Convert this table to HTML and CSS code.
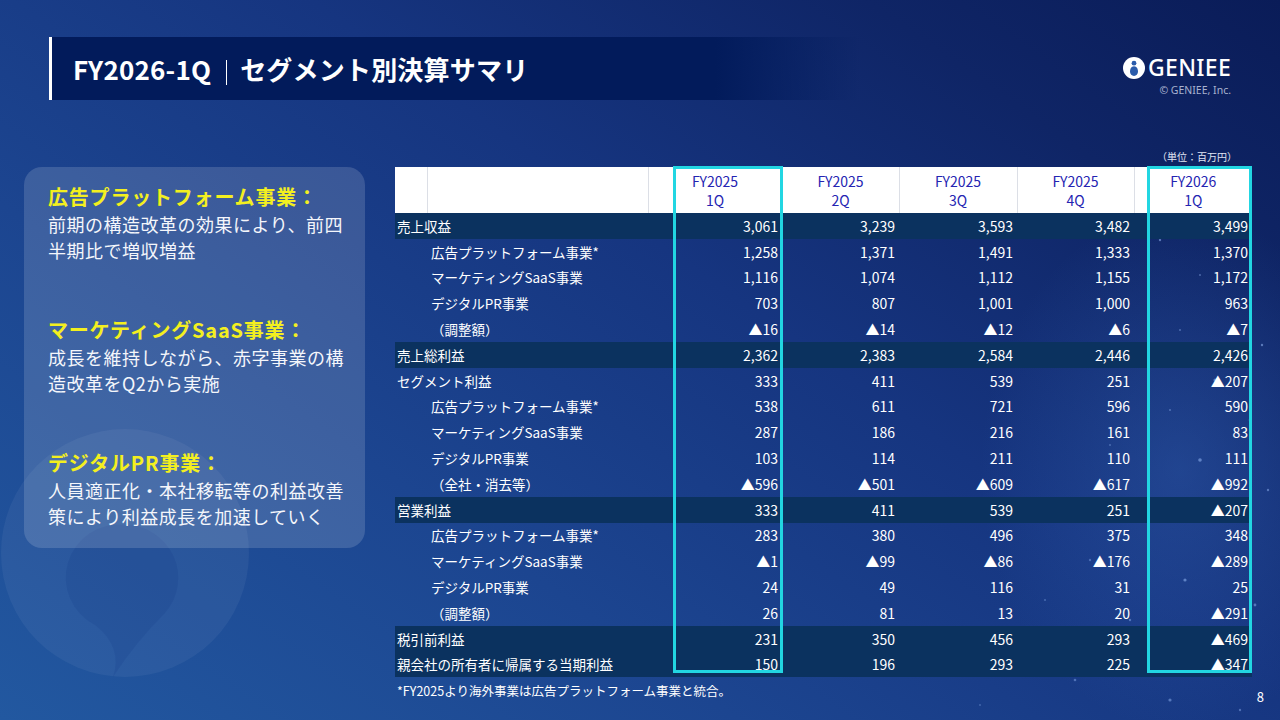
FILE: index.html
```html
<!DOCTYPE html>
<html lang="ja">
<head>
<meta charset="utf-8">
<title>FY2026-1Q セグメント別決算サマリ</title>
<link rel="stylesheet" href="styles.css">
</head>
<body>
<div class="slide">
  <svg class="bg-deco" width="1280" height="720" viewBox="0 0 1280 720" aria-hidden="true">
    <defs>
      <radialGradient id="glow" cx="0.5" cy="0.5" r="0.5">
        <stop offset="0" stop-color="#3a6cc0" stop-opacity="0.35"/>
        <stop offset="1" stop-color="#3a6cc0" stop-opacity="0"/>
      </radialGradient>
    </defs>
    <ellipse cx="1180" cy="470" rx="200" ry="260" fill="url(#glow)"/>
    <circle cx="125" cy="553" r="124" fill="#ffffff" fill-opacity="0.05"/>
    <path d="M125 525 a53 53 0 0 1 40 88 q-30 30 -52 64 q10 -30 -18 -52 a53 53 0 0 1 30 -100 z" fill="#0a2a78" fill-opacity="0.12"/>
    <g fill="#9fc4ff">
      <circle cx="1160" cy="240" r="1.2" fill-opacity="0.5"/>
      <circle cx="1200" cy="275" r="1" fill-opacity="0.4"/>
      <circle cx="1235" cy="300" r="1.5" fill-opacity="0.5"/>
      <circle cx="1180" cy="330" r="1" fill-opacity="0.4"/>
      <circle cx="1262" cy="345" r="1.2" fill-opacity="0.5"/>
      <circle cx="1215" cy="380" r="1.6" fill-opacity="0.45"/>
      <circle cx="1170" cy="410" r="1" fill-opacity="0.4"/>
      <circle cx="1250" cy="420" r="1.3" fill-opacity="0.5"/>
      <circle cx="1110" cy="445" r="1" fill-opacity="0.35"/>
      <circle cx="1200" cy="460" r="1.8" fill-opacity="0.5"/>
      <circle cx="1268" cy="490" r="1.2" fill-opacity="0.45"/>
      <circle cx="1150" cy="505" r="1.4" fill-opacity="0.45"/>
      <circle cx="1230" cy="530" r="1.1" fill-opacity="0.4"/>
      <circle cx="1090" cy="560" r="1.2" fill-opacity="0.35"/>
      <circle cx="1185" cy="580" r="1.6" fill-opacity="0.5"/>
      <circle cx="1045" cy="600" r="1" fill-opacity="0.35"/>
      <circle cx="1255" cy="605" r="1.4" fill-opacity="0.45"/>
      <circle cx="1130" cy="620" r="1.2" fill-opacity="0.4"/>
      <circle cx="1000" cy="640" r="1" fill-opacity="0.3"/>
      <circle cx="1210" cy="650" r="1.2" fill-opacity="0.45"/>
      <circle cx="1075" cy="680" r="1.3" fill-opacity="0.4"/>
      <circle cx="1170" cy="700" r="1.6" fill-opacity="0.45"/>
      <circle cx="980" cy="705" r="1" fill-opacity="0.3"/>
      <circle cx="1240" cy="710" r="1.2" fill-opacity="0.4"/>
    </g>
  </svg>

  <header class="top">
    <div class="title-bar">
      <h1 class="title">FY2026-1Q<span class="sep"></span>セグメント別決算サマリ</h1>
    </div>
    <div class="brand">
      <div class="logo">
        <svg class="logo-icon" width="22" height="22" viewBox="0 0 22 22" aria-hidden="true">
          <circle cx="11" cy="11" r="11" fill="#ffffff"/>
          <circle cx="11" cy="6.2" r="2.4" fill="#2b5cab"/>
          <path d="M11 9.3 C8.2 9.3 7 12.2 7 14.6 C7 17.2 8.8 19 11 19 C13.2 19 15 17.2 15 14.6 C15 12.2 13.8 9.3 11 9.3 Z" fill="#2b5cab"/>
        </svg>
        <span class="logo-text">GENIEE</span>
      </div>
      <div class="copy">© GENIEE, Inc.</div>
    </div>
  </header>

  <main class="content">
    <section class="summary">
      <div class="seg">
        <h2 class="seg-title">広告プラットフォーム事業：</h2>
        <p class="seg-text">前期の構造改革の効果により、前四半期比で増収増益</p>
      </div>
      <div class="seg">
        <h2 class="seg-title">マーケティングSaaS事業：</h2>
        <p class="seg-text">成長を維持しながら、赤字事業の構造改革をQ2から実施</p>
      </div>
      <div class="seg">
        <h2 class="seg-title">デジタルPR事業：</h2>
        <p class="seg-text">人員適正化・本社移転等の利益改善策により利益成長を加速していく</p>
      </div>
    </section>

    <section class="data">
      <div class="unit">（単位：百万円）</div>
      <div class="table-wrap">
        <table class="fin">
          <colgroup>
            <col class="c-ind"><col class="c-label"><col class="c-q1"><col class="c-q"><col class="c-q2"><col class="c-q"><col class="c-q2">
          </colgroup>
          <thead>
            <tr>
              <th class="h-blank"></th>
              <th class="h-blank"></th>
              <th>FY2025<br>1Q</th>
              <th>FY2025<br>2Q</th>
              <th>FY2025<br>3Q</th>
              <th>FY2025<br>4Q</th>
              <th class="h-last">FY2026<br>1Q</th>
            </tr>
          </thead>
          <tbody>
            <tr class="hl"><td colspan="2" class="lbl">売上収益</td><td>3,061</td><td>3,239</td><td>3,593</td><td>3,482</td><td>3,499</td></tr>
            <tr><td></td><td class="lbl">広告プラットフォーム事業*</td><td>1,258</td><td>1,371</td><td>1,491</td><td>1,333</td><td>1,370</td></tr>
            <tr><td></td><td class="lbl">マーケティングSaaS事業</td><td>1,116</td><td>1,074</td><td>1,112</td><td>1,155</td><td>1,172</td></tr>
            <tr><td></td><td class="lbl">デジタルPR事業</td><td>703</td><td>807</td><td>1,001</td><td>1,000</td><td>963</td></tr>
            <tr><td></td><td class="lbl">（調整額）</td><td>▲16</td><td>▲14</td><td>▲12</td><td>▲6</td><td>▲7</td></tr>
            <tr class="hl"><td colspan="2" class="lbl">売上総利益</td><td>2,362</td><td>2,383</td><td>2,584</td><td>2,446</td><td>2,426</td></tr>
            <tr><td colspan="2" class="lbl">セグメント利益</td><td>333</td><td>411</td><td>539</td><td>251</td><td>▲207</td></tr>
            <tr><td></td><td class="lbl">広告プラットフォーム事業*</td><td>538</td><td>611</td><td>721</td><td>596</td><td>590</td></tr>
            <tr><td></td><td class="lbl">マーケティングSaaS事業</td><td>287</td><td>186</td><td>216</td><td>161</td><td>83</td></tr>
            <tr><td></td><td class="lbl">デジタルPR事業</td><td>103</td><td>114</td><td>211</td><td>110</td><td>111</td></tr>
            <tr><td></td><td class="lbl">（全社・消去等）</td><td>▲596</td><td>▲501</td><td>▲609</td><td>▲617</td><td>▲992</td></tr>
            <tr class="hl"><td colspan="2" class="lbl">営業利益</td><td>333</td><td>411</td><td>539</td><td>251</td><td>▲207</td></tr>
            <tr><td></td><td class="lbl">広告プラットフォーム事業*</td><td>283</td><td>380</td><td>496</td><td>375</td><td>348</td></tr>
            <tr><td></td><td class="lbl">マーケティングSaaS事業</td><td>▲1</td><td>▲99</td><td>▲86</td><td>▲176</td><td>▲289</td></tr>
            <tr><td></td><td class="lbl">デジタルPR事業</td><td>24</td><td>49</td><td>116</td><td>31</td><td>25</td></tr>
            <tr><td></td><td class="lbl">（調整額）</td><td>26</td><td>81</td><td>13</td><td>20</td><td>▲291</td></tr>
            <tr class="hl"><td colspan="2" class="lbl">税引前利益</td><td>231</td><td>350</td><td>456</td><td>293</td><td>▲469</td></tr>
            <tr class="hl"><td colspan="2" class="lbl">親会社の所有者に帰属する当期利益</td><td>150</td><td>196</td><td>293</td><td>225</td><td>▲347</td></tr>
          </tbody>
        </table>
        <div class="focus focus-a"></div>
        <div class="focus focus-b"></div>
      </div>
    </section>
  </main>

  <footer class="foot">
    <p class="note">*FY2025より海外事業は広告プラットフォーム事業と統合。</p>
    <span class="page">8</span>
  </footer>
</div>
</body>
</html>
```

FILE: styles.css
```css
* { box-sizing: border-box; }

html, body {
  margin: 0;
  padding: 0;
}

body {
  width: 1280px;
  height: 720px;
  overflow: hidden;
  font-family: "Noto Sans CJK JP", "Noto Sans", sans-serif;
  color: #ffffff;
}

.slide {
  position: relative;
  width: 1280px;
  height: 720px;
  overflow: hidden;
  background: linear-gradient(215deg, #0a1c58 0%, #0f2566 18%, #163580 42%, #1c4590 68%, #2258a0 100%);
}

.bg-deco {
  position: absolute;
  left: 0;
  top: 0;
  z-index: 0;
}

.top, .content, .foot {
  position: relative;
  z-index: 1;
}

/* Header */
.top {
  display: flex;
  justify-content: space-between;
  align-items: flex-start;
  padding: 37px 49px 0 49px;
  height: 100px;
}

.title-bar {
  width: 812px;
  height: 63px;
  border-left: 3px solid #ffffff;
  background: linear-gradient(90deg, #021b5b 0%, #021b5b 82%, rgba(2, 27, 91, 0) 100%);
  padding-left: 21px;
}

.title {
  margin: 0;
  font-size: 26px;
  font-weight: 700;
  line-height: 63px;
  letter-spacing: 0.2px;
  white-space: nowrap;
}

.sep {
  display: inline-block;
  width: 1px;
  height: 25px;
  background: #ffffff;
  margin: 0 13px 0 15px;
  vertical-align: -5px;
}

.brand {
  display: flex;
  flex-direction: column;
  align-items: flex-end;
  margin-top: 19px;
}

.logo {
  display: flex;
  align-items: center;
  gap: 3px;
  height: 23px;
}

.logo-icon {
  display: block;
}

.logo-text {
  font-family: "Noto Sans", sans-serif;
  font-size: 23px;
  font-weight: 500;
  line-height: 23px;
  letter-spacing: 0.3px;
  color: #ffffff;
}

.copy {
  margin-top: 5px;
  font-family: "Noto Sans", sans-serif;
  font-size: 10.5px;
  line-height: 12px;
  color: #a8b2cf;
}

/* Main */
.content {
  display: flex;
  align-items: flex-start;
  gap: 30px;
  padding: 50px 28px 0 24px;
}

.summary {
  width: 341px;
  height: 381px;
  margin-top: 17px;
  padding: 16px 14px 0 24px;
  border-radius: 18px;
  background: rgba(255, 255, 255, 0.15);
}

.seg + .seg {
  margin-top: 53px;
}

.seg-title {
  margin: 0;
  font-size: 20px;
  font-weight: 700;
  line-height: 28px;
  letter-spacing: 0.8px;
  color: #f3ef1f;
}

.seg-text {
  margin: 0;
  font-size: 18px;
  font-weight: 400;
  line-height: 26px;
  letter-spacing: 0.5px;
  color: #f4f6fb;
}

.data {
  width: 857px;
}

.unit {
  text-align: right;
  padding-right: 15px;
  font-size: 10px;
  line-height: 14px;
  height: 17px;
  color: #e2e7f4;
}

.table-wrap {
  position: relative;
}

.fin {
  width: 857px;
  border-collapse: collapse;
  border-spacing: 0;
  table-layout: fixed;
}

.c-ind { width: 32px; }
.c-label { width: 221px; }
.c-q1 { width: 134px; }
.c-q { width: 117px; }
.c-q2 { width: 118px; }

.fin thead tr {
  height: 46px;
  background: #ffffff;
}

.fin th {
  padding: 2px 0 0;
  font-size: 14px;
  font-weight: 400;
  line-height: 19px;
  color: #2424b2;
  text-align: center;
  border-right: 1px solid #dcdfe6;
}

.fin th.h-last {
  border-right: none;
}

.fin tbody tr {
  height: 25.8px;
}

.fin td {
  padding: 0 4px 0 0;
  font-size: 14px;
  line-height: 18px;
  text-align: right;
  white-space: nowrap;
  color: #ffffff;
}

.fin td.lbl {
  text-align: left;
  font-size: 13.5px;
  padding: 0 0 0 4px;
}

.fin td.lbl[colspan] {
  padding-left: 2px;
}

.fin tr.hl {
  background: #0b325f;
}

.focus {
  position: absolute;
  top: -1px;
  height: 507px;
  border: 3px solid #22d6e2;
  pointer-events: none;
}

.focus-a {
  left: 278px;
  width: 110px;
}

.focus-b {
  left: 752px;
  width: 105px;
}

/* Footer */
.foot {
  display: flex;
  justify-content: space-between;
  align-items: flex-start;
  padding: 6px 16px 0 397px;
}

.note {
  margin: 0;
  font-size: 12.5px;
  line-height: 16px;
  color: #ffffff;
}

.page {
  margin-top: 6px;
  font-size: 13px;
  line-height: 16px;
  color: #ffffff;
}
```
